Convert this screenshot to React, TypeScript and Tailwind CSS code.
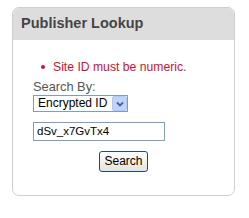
import React from 'react';

const App: React.FC = () => {
  return (
    <div className="w-[249px] h-[218px] bg-white pt-[7px] pl-[12px]" style={{ fontFamily: '"Liberation Sans", Arial, sans-serif' }}>
      <div className="w-[223px] h-[189px] border border-[#cfcfcf] rounded-[7px] overflow-hidden">
        {/* Header */}
        <div className="h-[32px] bg-[#dddddd] pl-[8px] pt-[7px]">
          <h2 className="text-[14.5px] leading-[16px] font-bold text-[#454545]">Publisher Lookup</h2>
        </div>

        <div className="pl-[20px] pt-[20px]">
          {/* Error */}
          <div className="flex items-center pl-[8px] h-[14px]">
            <span className="w-[4px] h-[4px] rounded-full bg-[#cc1133] mr-[8px]" />
            <span className="text-[12.2px] leading-[14px] text-[#cc1133]">Site ID must be numeric.</span>
          </div>

          <div className="mt-[6px] text-[12.8px] leading-[14px] text-[#555555]">Search By:</div>

          {/* Select */}
          <div className="mt-[1px] flex items-center w-[95px] h-[17px] border border-[#7f9db9] bg-white">
            <span className="flex-1 pl-[4px] text-[12px] leading-[15px] text-black">Encrypted ID</span>
            <span className="w-[15px] h-[15px] flex items-center justify-center bg-[#c1d3fb] border border-[#b3c8f5] rounded-[2px]">
              <svg width="8" height="6" viewBox="0 0 8 6">
                <path d="M1 1.5 L4 4.5 L7 1.5" fill="none" stroke="#4d6185" strokeWidth="1.8" />
              </svg>
            </span>
          </div>

          {/* Input */}
          <div className="mt-[10px] w-[132px] h-[19px] border border-[#7f9db9] bg-white pl-[3px] flex items-center">
            <span className="text-[11.5px] leading-[15px] text-black">dSv_x7GvTx4</span>
          </div>
        </div>

        {/* Button */}
        <div className="flex justify-center mt-[10px]">
          <button className="w-[49px] h-[21px] border border-[#1c4c7c] rounded-[3px] bg-gradient-to-b from-white to-[#e6e3d6] text-[12px] leading-[15px] text-black">
            Search
          </button>
        </div>
      </div>
    </div>
  );
};

export default App;
